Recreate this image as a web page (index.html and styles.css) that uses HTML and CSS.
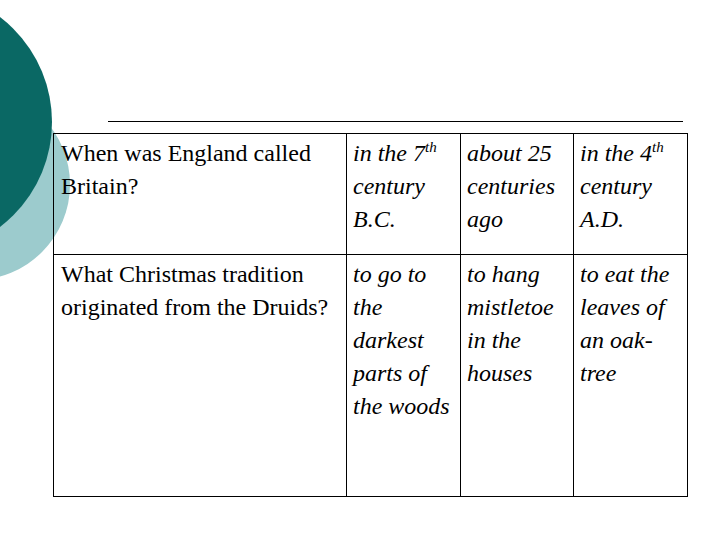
FILE: index.html
```html
<!DOCTYPE html>
<html>
<head>
<meta charset="utf-8">
<link rel="stylesheet" href="styles.css">
</head>
<body>
<div class="slide">
  <div class="circle circle-light"></div>
  <div class="circle circle-dark"></div>
  <div class="content">
    <div class="rule"></div>
    <table class="quiz">
      <colgroup>
        <col class="c-q">
        <col class="c-a">
        <col class="c-b">
        <col class="c-c">
      </colgroup>
      <tr class="row-1">
        <td class="q">When was England called Britain?</td>
        <td class="ans">in the 7<sup>th</sup> century B.C.</td>
        <td class="ans">about 25 centuries ago</td>
        <td class="ans">in the 4<sup>th</sup> century A.D.</td>
      </tr>
      <tr class="row-2">
        <td class="q">What Christmas tradition originated from the Druids?</td>
        <td class="ans">to go to the darkest parts of the woods</td>
        <td class="ans">to hang mistletoe in the houses</td>
        <td class="ans">to eat the leaves of an oak-tree</td>
      </tr>
    </table>
  </div>
</div>
</body>
</html>
```

FILE: styles.css
```css
html, body {
  margin: 0;
  padding: 0;
  background: #ffffff;
}

.slide {
  position: relative;
  width: 720px;
  height: 540px;
  overflow: hidden;
  background: #ffffff;
  color: #000000;
  font-family: "Liberation Serif", "Times New Roman", serif;
}

.circle {
  position: absolute;
  border-radius: 50%;
}

.circle-dark {
  left: -212px;
  top: -10px;
  width: 264px;
  height: 264px;
  background: #0a6864;
}

.circle-light {
  left: -121px;
  top: 89px;
  width: 191px;
  height: 191px;
  background: #9ccbcd;
}

.content {
  position: relative;
  padding-top: 121px;
}

.rule {
  margin-left: 108px;
  width: 575px;
  height: 1px;
  background: #000000;
}

.quiz {
  margin-top: 11px;
  margin-left: 53px;
  border-collapse: collapse;
  table-layout: fixed;
  width: 634px;
}

.c-q { width: 293px; }
.c-a { width: 114px; }
.c-b { width: 113px; }
.c-c { width: 114px; }

.quiz td {
  border: 1px solid #000000;
  vertical-align: top;
  padding: 3px 5px 0 7px;
  font-family: "Liberation Serif", "Times New Roman", serif;
  font-size: 24px;
  line-height: 33px;
}

.quiz td.ans {
  font-style: italic;
  padding-left: 6px;
}

.row-1 td { height: 117px; }
.row-2 td { height: 238px; }

.quiz sup {
  font-size: 15px;
  line-height: 0;
  vertical-align: 9px;
}
```
